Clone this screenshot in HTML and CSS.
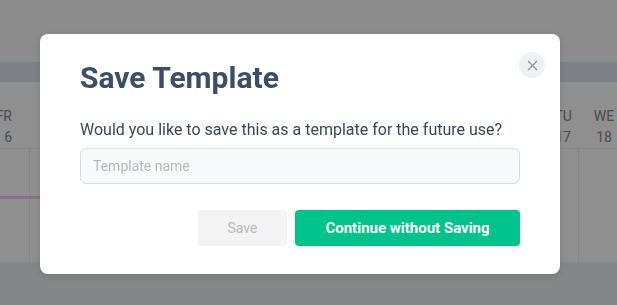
FILE: index.html
```html
<!DOCTYPE html>
<html lang="en">
<head>
  <meta charset="UTF-8" />
  <title>Save Template</title>
  <link rel="stylesheet" href="styles.css">
</head>
<body>
  <div class="page">
    <div class="topbar"></div>
    <div class="toolbar"></div>
    <div class="calendar">
      <div class="days">
        <div class="day day-fr"><span>FR</span><span>6</span></div>
        <div class="day day-gap"></div>
        <div class="day day-tu"><span>TU</span><span>17</span></div>
        <div class="day day-we"><span>WE</span><span>18</span></div>
      </div>
      <div class="grid">
        <div class="col col-fr"><div class="event"></div></div>
        <div class="col col-mid"></div>
        <div class="col col-we"></div>
      </div>
    </div>
    <div class="footer"></div>
  </div>

  <div class="overlay">
    <div class="modal">
      <button class="close" aria-label="Close">
        <svg width="11" height="11" viewBox="0 0 11 11">
          <path d="M1 1 L10 10 M10 1 L1 10" stroke="#8b9096" stroke-width="1.2" fill="none" />
        </svg>
      </button>
      <h2 class="title">Save Template</h2>
      <p class="question">Would you like to save this as a template for the future use?</p>
      <input type="text" class="name-input" placeholder="Template name" />
      <div class="actions">
        <button class="btn btn-save" disabled>Save</button>
        <button class="btn btn-continue">Continue without Saving</button>
      </div>
    </div>
  </div>
</body>
</html>
```

FILE: styles.css
```css
body {
  margin: 0;
  font-family: Roboto, 'Liberation Sans', sans-serif;
  background: #fafafa;
  height: 305px;
  overflow: hidden;
}

.page {
  display: flex;
  flex-direction: column;
  height: 305px;
}

.topbar {
  height: 62px;
  background: #fafafa;
}

.toolbar {
  height: 20px;
  background: #dfe5ed;
}

.calendar {
  height: 180px;
  background: #fff;
  display: flex;
  flex-direction: column;
}

.days {
  display: flex;
  height: 67px;
  border-bottom: 1px solid #eeeeee;
  box-sizing: border-box;
}

.day {
  display: flex;
  flex-direction: column;
  align-items: center;
  padding-top: 24px;
  font-size: 14px;
  line-height: 21px;
  color: #86868f;
}

.day-fr {
  width: 12px;
  align-items: flex-end;
}

.day-gap {
  flex: 1;
}

.day-tu {
  width: 34px;
  margin-right: 11px;
}

.day-we {
  width: 26px;
}

.grid {
  flex: 1;
  display: flex;
}

.col {
  border-right: 1px solid #eeeeee;
}

.col-fr {
  width: 29px;
  padding-top: 47px;
}

.event {
  width: 60px;
  height: 3px;
  background: #efc9f5;
}

.col-mid {
  flex: 1;
}

.col-we {
  width: 38px;
  border-right: none;
}

.footer {
  flex: 1;
  background: #edeff3;
}

.overlay {
  position: fixed;
  inset: 0;
  background: rgba(0, 0, 0, 0.44);
}

.modal {
  position: absolute;
  left: 40px;
  top: 34px;
  width: 520px;
  height: 240px;
  box-sizing: border-box;
  padding: 26px 40px 0;
  background: #fff;
  border-radius: 8px;
  box-shadow: 0 2px 8px rgba(0, 0, 0, 0.12);
}

.close {
  position: absolute;
  top: 18px;
  right: 15px;
  width: 26px;
  height: 26px;
  border: none;
  border-radius: 50%;
  background: #eef0f3;
  padding: 0;
  display: flex;
  align-items: center;
  justify-content: center;
}

.title {
  margin: 0;
  font-size: 30px;
  line-height: 36px;
  font-weight: 700;
  color: #3c4e66;
}

.question {
  margin: 24px 0 8px;
  font-size: 16px;
  line-height: 20px;
  color: #3b4759;
}

.name-input {
  display: block;
  width: 100%;
  height: 36px;
  box-sizing: border-box;
  padding: 0 12px;
  border: 1px solid #dadcdf;
  border-radius: 6px;
  background: #f8f9fa;
  font-family: Roboto, sans-serif;
  font-size: 14px;
  outline: none;
}

.name-input::placeholder {
  color: #b7babd;
}

.actions {
  display: flex;
  justify-content: flex-end;
  gap: 8px;
  margin-top: 26px;
}

.btn {
  height: 36px;
  border: none;
  border-radius: 4px;
  font-family: Roboto, sans-serif;
  font-size: 14px;
}

.btn-save {
  width: 89px;
  background: #f3f3f3;
  color: #bcbcbc;
}

.btn-continue {
  width: 225px;
  background: #00c28b;
  color: #fff;
  font-size: 15px;
  font-weight: 700;
}
```
